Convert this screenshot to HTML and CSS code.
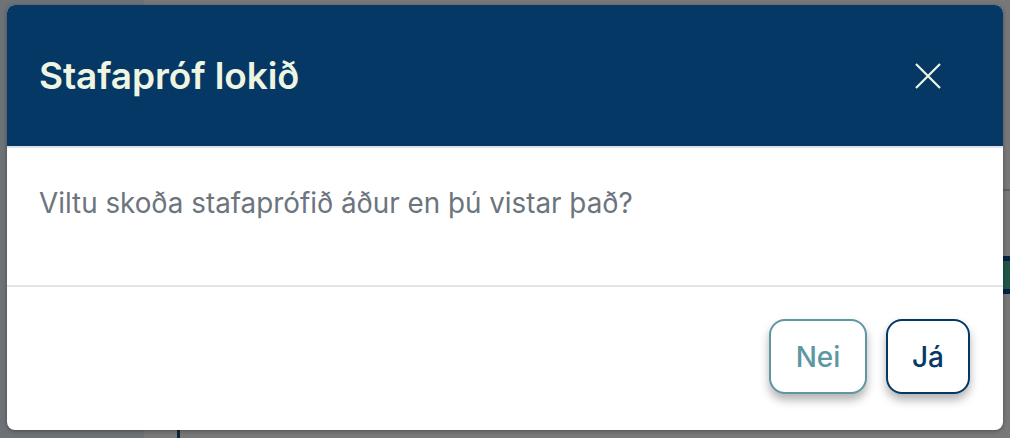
FILE: index.html
```html
<!DOCTYPE html>
<html lang="is">
<head>
<meta charset="utf-8">
<title>Stafapróf lokið</title>
<link rel="stylesheet" href="styles.css">
</head>
<body>
<div class="page">
  <div class="page-side"></div>
  <div class="page-main">
    <div class="page-rule"></div>
    <div class="page-edge">
      <span class="edge-line"></span>
      <span class="edge-block"></span>
    </div>
  </div>
</div>
<div class="overlay">
  <div class="modal" role="dialog">
    <div class="modal-header">
      <h2 class="modal-title">Stafapróf lokið</h2>
      <button class="close" aria-label="Loka">
        <svg width="26" height="26" viewBox="0 0 26 26"><path d="M1 1 L25 25 M25 1 L1 25" stroke="#eef5e1" stroke-width="2.2" fill="none"/></svg>
      </button>
    </div>
    <div class="modal-body">
      <p class="message">Viltu skoða stafaprófið áður en þú vistar það?</p>
    </div>
    <div class="modal-footer">
      <button class="btn btn-no">Nei</button>
      <button class="btn btn-yes">Já</button>
    </div>
  </div>
</div>
</body>
</html>
```
FILE: styles.css
```css
html, body {
  margin: 0;
  padding: 0;
  height: 100%;
  overflow: hidden;
}
body {
  font-family: Inter, "Noto Sans", "Liberation Sans", sans-serif;
  background: #6f7479;
  position: relative;
}
.page {
  display: flex;
  height: 100%;
}
.page-side {
  width: 144px;
  background: #6d7277;
}
.page-main {
  flex: 1;
  background: #787878;
  position: relative;
}
.page-rule {
  position: absolute;
  left: 33px;
  top: 420px;
  width: 3px;
  height: 30px;
  background: #0b2340;
}
.page-edge {
  position: absolute;
  right: 0;
  top: 0;
  width: 8px;
  height: 100%;
}
.edge-line {
  position: absolute;
  left: 0; right: 0;
  top: 189px;
  height: 2px;
  background: #5d6063;
}
.edge-block {
  position: absolute;
  left: 0; right: 0;
  top: 256px;
  height: 38px;
  background: #1f5648;
  border-top: 5px solid #06203d;
  border-bottom: 5px solid #06203d;
  box-sizing: border-box;
}
.overlay {
  position: absolute;
  inset: 0;
  padding: 5px 7px 0 7px;
}
.modal {
  width: 996px;
  height: 425px;
  background: #fff;
  border-radius: 8px;
  overflow: hidden;
  display: flex;
  flex-direction: column;
  box-shadow: 0 1px 4px rgba(0,0,0,0.35);
}
.modal-header {
  height: 141px;
  background: #063866;
  border-bottom: 2px solid #dde2e6;
  display: flex;
  align-items: center;
  justify-content: space-between;
  padding: 0 62px 0 32px;
  flex: none;
}
.modal-title {
  margin: 0;
  font-size: 37px;
  font-weight: 600;
  color: #eef5e1;
  letter-spacing: -0.1px;
}
.close {
  background: none;
  border: 0;
  padding: 0;
  width: 26px;
  height: 26px;
  cursor: pointer;
  display: flex;
}
.modal-body {
  height: 139px;
  box-sizing: border-box;
  padding: 35px 32px 0 32px;
  border-bottom: 2px solid #e2e5e8;
  flex: none;
}
.message {
  margin: 0;
  font-size: 27.8px;
  line-height: 40px;
  color: #6c757d;
}
.modal-footer {
  flex: 1;
  display: flex;
  justify-content: flex-end;
  align-items: flex-start;
  gap: 19px;
  padding: 32px 33px 0 0;
}
.btn {
  height: 75px;
  border-radius: 16px;
  background: #fff;
  font-family: Inter, "Noto Sans", "Liberation Sans", sans-serif;
  font-size: 28px;
  font-weight: 500;
  border: 2px solid;
  box-shadow: 0 6px 10px rgba(0,0,0,0.3);
  cursor: pointer;
  padding: 0;
}
.btn-no {
  width: 98px;
  color: #5d97a1;
  border-color: #5d97a1;
}
.btn-yes {
  width: 84px;
  color: #063866;
  border-color: #063866;
}
```
